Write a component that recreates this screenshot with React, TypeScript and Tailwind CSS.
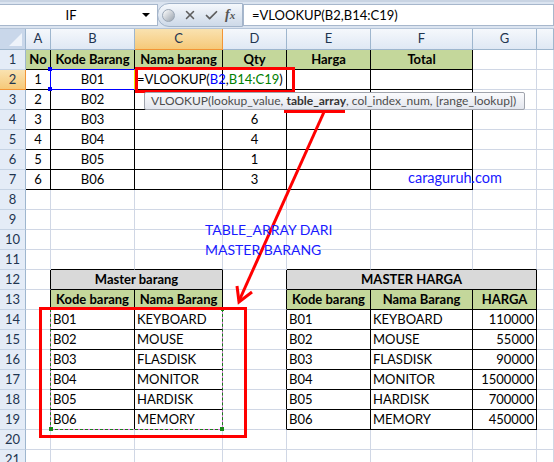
import React from "react";
import { X, Check } from "lucide-react";

type Cell = {
  t?: React.ReactNode;
  a?: "c" | "l" | "r";
  b?: boolean;
  bg?: "g" | "gr";
  br?: boolean;
  bb?: boolean;
  span?: 2 | 3;
  z?: boolean;
} | null;

function buildRows(): Cell[][] {
  const rows: Cell[][] = [];
  for (let r = 1; r <= 21; r++) {
    const row: Cell[] = [];
    for (let c = 0; c < 8; c++) row.push({});
    rows.push(row);
  }
  const R = (n: number) => rows[n - 1];
  // Table 1
  for (let r = 1; r <= 7; r++) for (let c = 0; c <= 5; c++) {
    R(r)[c] = { ...R(r)[c]!, br: true, bb: true };
  }
  const head = ["No", "Kode Barang", "Nama barang", "Qty", "Harga", "Total"];
  head.forEach((h, i) => (R(1)[i] = { ...R(1)[i]!, t: h, b: true, bg: "g", a: "c" }));
  const qty = ["", "", "6", "4", "1", "3"];
  for (let i = 0; i < 6; i++) {
    const r = i + 2;
    R(r)[0] = { ...R(r)[0]!, t: String(i + 1), a: "c" };
    R(r)[1] = { ...R(r)[1]!, t: "B0" + (i + 1), a: "c" };
    R(r)[3] = { ...R(r)[3]!, t: qty[i], a: "c" };
  }
  R(2)[2] = {
    ...R(2)[2]!,
    a: "l",
    z: true,
    t: (
      <span>
        =VLOOKUP(<span className="text-[#0000ff]">B2</span>,<span className="text-[#008000]">B14:C19</span>)
      </span>
    ),
  };
  // Master tables
  for (const c of [1, 2]) R(11)[c] = { ...R(11)[c]!, bb: true };
  for (const c of [4, 5, 6]) R(11)[c] = { ...R(11)[c]!, bb: true };
  for (let r = 12; r <= 19; r++) {
    R(r)[0] = { ...R(r)[0]!, br: true };
    R(r)[3] = { ...R(r)[3]!, br: true };
    for (const c of [1, 2, 4, 5, 6]) R(r)[c] = { ...R(r)[c]!, br: true, bb: true };
  }
  R(12)[1] = { t: "Master barang", b: true, bg: "gr", a: "c", br: true, bb: true, span: 2 };
  R(12)[2] = null;
  R(12)[4] = { t: "MASTER HARGA", b: true, bg: "gr", a: "c", br: true, bb: true, span: 3 };
  R(12)[5] = null;
  R(12)[6] = null;
  R(13)[1] = { t: "Kode barang", b: true, bg: "g", a: "c", br: true, bb: true };
  R(13)[2] = { t: "Nama Barang", b: true, bg: "g", a: "c", br: true, bb: true };
  R(13)[4] = { t: "Kode barang", b: true, bg: "g", a: "c", br: true, bb: true };
  R(13)[5] = { t: "Nama Barang", b: true, bg: "g", a: "c", br: true, bb: true };
  R(13)[6] = { t: "HARGA", b: true, bg: "g", a: "c", br: true, bb: true };
  const names = ["KEYBOARD", "MOUSE", "FLASDISK", "MONITOR", "HARDISK", "MEMORY"];
  const prices = ["110000", "55000", "90000", "1500000", "700000", "450000"];
  for (let i = 0; i < 6; i++) {
    const r = 14 + i;
    R(r)[1] = { ...R(r)[1]!, t: "B0" + (i + 1), a: "l" };
    R(r)[2] = { ...R(r)[2]!, t: names[i], a: "l" };
    R(r)[4] = { ...R(r)[4]!, t: "B0" + (i + 1), a: "l" };
    R(r)[5] = { ...R(r)[5]!, t: names[i], a: "l" };
    R(r)[6] = { ...R(r)[6]!, t: prices[i], a: "r" };
  }
  return rows;
}

function CellView({ c }: { c: NonNullable<Cell> }) {
  const cls = [
    "h-[20px] border-r border-b flex items-center whitespace-nowrap leading-[19px] text-[13px] text-black",
    c.br ? "border-r-black" : "border-r-[#d0d7e5]",
    c.bb ? "border-b-black" : "border-b-[#d0d7e5]",
    c.bg === "g" ? "bg-[#c4d79b]" : c.bg === "gr" ? "bg-[#d9d9d9]" : "",
    c.a === "c" ? "justify-center" : c.a === "r" ? "justify-end pr-[2px]" : "justify-start pl-[2px]",
    c.b ? "font-bold" : "",
    c.span === 2 ? "col-span-2" : c.span === 3 ? "col-span-3" : "",
    c.z ? "relative z-10 overflow-visible" : "overflow-hidden",
  ].join(" ");
  return <div className={cls}>{c.t}</div>;
}

export default function App() {
  const rows = buildRows();
  const letters = ["A", "B", "C", "D", "E", "F", "G", ""];
  return (
    <div className="relative w-[554px] h-[462px] overflow-hidden bg-white font-['Lato',sans-serif]">
      {/* Formula bar */}
      <div className="h-[29px] bg-[#dbe4f0] flex items-center border-t-[2px] border-t-[#c9d4e3] border-b border-b-[#b4c4d8]">
        <div className="w-[158px] h-[22px] bg-white border border-[#a7b7cc] border-l-0 flex items-center">
          <div className="w-[142px] text-center text-[13px] text-black leading-[20px]">IF</div>
          <div className="w-0 h-0 border-l-[4px] border-r-[4px] border-t-[4px] border-l-transparent border-r-transparent border-t-black"></div>
        </div>
        <div className="w-[86px] h-[24px] -ml-[1px] rounded-l-[12px] border border-[#a3b4ca] bg-gradient-to-b from-[#f5f8fc] to-[#cdd9e8] flex items-center">
          <div className="ml-[4px] w-[13px] h-[13px] rounded-full bg-gradient-to-br from-[#ffffff] to-[#9aa3ae] border border-[#9aa6b5]"></div>
          <X className="ml-[8px] text-[#5d5d5d]" size={14} strokeWidth={2.6} />
          <Check className="ml-[7px] text-[#5d5d5d]" size={15} strokeWidth={2.8} />
          <span className="ml-[6px] font-['Liberation_Serif',serif] italic font-bold text-[14px] text-[#555] leading-none">
            f<span className="text-[11px]">x</span>
          </span>
        </div>
        <div className="flex-1 h-[22px] bg-white border border-[#a7b7cc] flex items-center pl-[8px] text-[13px] text-black leading-[20px]">
          =VLOOKUP(B2,B14:C19)
        </div>
      </div>

      {/* Grid */}
      <div className="grid grid-cols-[26px_25px_84px_88px_64px_84px_102px_64px_17px]">
        <div className="h-[21px] border-r border-b border-r-[#9eb6ce] border-b-[#9eb6ce] bg-[#c9d7ea] relative">
          <svg width="25" height="20" className="absolute left-0 top-0">
            <polygon points="9,17 22,17 22,4" fill="#eef3fa" />
          </svg>
        </div>
        {letters.map((l, i) =>
          i === 2 ? (
            <div key={i} className="h-[21px] border-r border-b border-r-[#f29536] border-b-[#f29536] bg-gradient-to-b from-[#f9e2b0] to-[#f6c978] flex items-center justify-center text-[13px] text-[#1f3550]">
              {l}
            </div>
          ) : (
            <div key={i} className="h-[21px] border-r border-b border-r-[#9eb6ce] border-b-[#9eb6ce] bg-gradient-to-b from-[#f5f8fc] to-[#dfe8f4] flex items-center justify-center text-[13px] text-[#1f3550]">
              {l}
            </div>
          )
        )}
        {rows.map((row, ri) => (
          <React.Fragment key={ri}>
            {ri === 1 ? (
              <div className="h-[20px] border-r border-b border-r-[#f29536] border-b-[#f29536] bg-gradient-to-b from-[#f9e2b0] to-[#f6c978] flex items-center justify-center text-[13px] text-[#1f3550]">
                {ri + 1}
              </div>
            ) : (
              <div className="h-[20px] border-r border-b border-r-[#9eb6ce] border-b-[#c5d3e4] bg-[#e4ecf7] flex items-center justify-center text-[13px] text-[#1f3550]">
                {ri + 1}
              </div>
            )}
            {row.map((c, ci) => (c ? <CellView key={ci} c={c} /> : null))}
          </React.Fragment>
        ))}
      </div>

      {/* B2 reference highlight */}
      <div className="absolute left-[50px] top-[69px] w-[85px] h-[21px] border-[1.5px] border-[#0000ff] border-r-[#e6e600] z-20"></div>
      <div className="absolute left-[48px] top-[67px] w-[4px] h-[4px] bg-[#0000ff] z-20"></div>
      <div className="absolute left-[48px] top-[87px] w-[4px] h-[4px] bg-[#0000ff] z-20"></div>

      {/* Red box around formula */}
      <div className="absolute left-[135px] top-[67px] w-[160px] h-[26px] border-[3px] border-[#ff0000] z-20"></div>

      {/* Tooltip */}
      <div className="absolute left-[144px] top-[92px] w-[381px] h-[18px] rounded-[2px] border border-[#a0a4ad] bg-gradient-to-b from-[#fbfbfd] to-[#e3e6ee] z-20 flex items-center pl-[6px] text-[12px] text-[#4d4d4d] whitespace-pre leading-[16px]">
        VLOOKUP(lookup_value, <span className="font-bold text-[#333]">table_array</span>, col_index_num, [range_lookup])
      </div>
      <div className="absolute left-[284px] top-[110px] w-[61px] h-[3px] bg-[#ff0000] z-20"></div>

      {/* Arrow */}
      <svg className="absolute left-0 top-0 z-20 pointer-events-none" width="554" height="462">
        <line x1="324" y1="112" x2="239" y2="301" stroke="#ff0000" strokeWidth="3" />
        <polyline points="252,292 239,302 237,286" fill="none" stroke="#ff0000" strokeWidth="3" strokeLinejoin="miter" />
      </svg>

      {/* Annotation */}
      <div className="absolute left-[205px] top-[220px] z-20 text-[14px] leading-[20px] text-[#1a1aff]">
        <div>TABLE_ARRAY DARI</div>
        <div>MASTER BARANG</div>
      </div>
      <div className="absolute left-[408px] top-[168px] z-20 text-[14.5px] leading-[20px] text-[#1a1aff]">caraguruh.com</div>

      {/* Marching ants */}
      <div className="absolute left-[50px] top-[309px] w-[173px] h-[121px] border border-[#e070e0] z-20"></div>
      <div className="absolute left-[50px] top-[309px] w-[173px] h-[121px] border border-dashed border-[#1b7a1b] z-20"></div>
      <div className="absolute left-[49px] top-[427px] w-[4px] h-[4px] bg-[#1b8a1b] z-20"></div>
      <div className="absolute left-[220px] top-[427px] w-[4px] h-[4px] bg-[#1b8a1b] z-20"></div>
      <div className="absolute left-[221px] top-[308px] w-[3px] h-[3px] bg-[#1b8a1b] z-20"></div>

      {/* Red box around master */}
      <div className="absolute left-[39px] top-[307px] w-[208px] h-[131px] border-[3px] border-[#ff0000] z-20"></div>
    </div>
  );
}
